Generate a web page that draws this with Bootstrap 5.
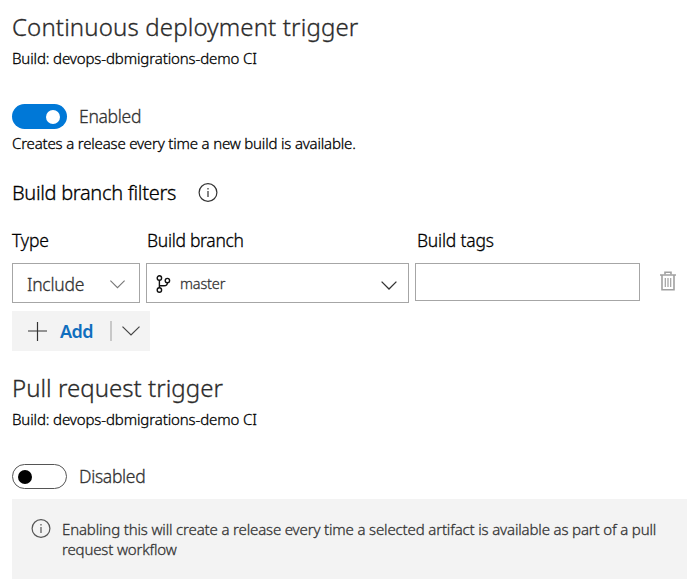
<!DOCTYPE html>
<html lang="en">
<head>
<meta charset="utf-8">
<meta name="viewport" content="width=device-width, initial-scale=1">
<title>Release triggers</title>
<link href="https://cdn.jsdelivr.net/npm/bootstrap@5.3.0/dist/css/bootstrap.min.css" rel="stylesheet">
<style>
body { font-family: "Noto Sans", "Open Sans", sans-serif; font-size: 15px; font-weight: 300; line-height: 20px; color: #000; background: #fff; -webkit-text-stroke: .3px currentColor; }
.panel { padding: 11px 7px 5px 12px; }
.title { font-size: 24px; line-height: 32px; letter-spacing: .14px; font-weight: 300; color: #2b2b2b; margin: 0 0 5px; }
.pr-title { letter-spacing: .03px; margin-top: 21px; }
.source { letter-spacing: -.12px; }
.toggle-row { margin-top: 36px; height: 25px; gap: 12px; font-size: 17.5px; letter-spacing: -.3px; color: #333; }
.toggle-row span { padding-bottom: 2px; }
.toggle-row.pr { margin-top: 35px; }
.switch { width: 55px; height: 25px; border: 0; border-radius: 13px; padding: 0 7px; background: #0078d7; }
.switch i { width: 14px; height: 14px; border-radius: 50%; background: #fff; display: block; }
.switch.off { background: #fff; border: 1px solid #555; padding: 0 5px; }
.switch.off i { background: #000; }
.hint { margin-top: 4px; letter-spacing: -.18px; }
.filters-title { font-size: 20px; line-height: 28px; letter-spacing: -.32px; font-weight: 300; margin: 0; }
.filters-head { margin-top: 26px; gap: 22px; }
.filter-grid { display: grid; grid-template-columns: 128px 263px 225px auto; column-gap: 6px; margin-top: 21px; }
.filter-grid label { font-size: 17.5px; line-height: 24px; letter-spacing: -.3px; margin-bottom: 11px; padding-left: 1px; }
.filter-grid label:first-child { padding-left: 0; letter-spacing: -.1px; }
.filter-grid label:nth-child(3) { padding-left: 2px; letter-spacing: -.2px; }
.box { border: 1px solid #a6a6a6; border-radius: 0; background: #fff; color: #333; height: 40px; padding: 0; text-align: left; font-weight: 300; }
.type-box { font-size: 17.5px; letter-spacing: -.26px; padding: 2px 14px 0 14px; }
.branch-box { font-size: 14.5px; letter-spacing: -.15px; padding: 1px 11px 0 9px; }
.branch-name { margin-left: 9px; padding-bottom: 2px; }
.tags-box { height: 38px; width: 100%; }
.trash { margin: 8px 0 0 14px; padding: 0; border: 0; width: 18px; height: 20px; background: none; }
.add-group { width: 138px; height: 40px; background: #f3f3f3; margin-top: 8px; }
.add-btn { color: #106ebe; font-weight: 600; font-size: 18px; letter-spacing: -.6px; padding: 0 0 0 16px; border: 0; background: none; gap: 13px; width: 98px; -webkit-text-stroke: 0; }
.add-menu { border: 0; background: none; padding: 0 0 0 10px; }
.divider { width: 2px; height: 20px; background: #c8c8c8; }
.info { background: #f3f3f3; color: #333; height: 80px; margin-top: 10px; padding: 20px 20px 0 19px; gap: 11px; letter-spacing: -.15px; }
svg { display: block; flex: none; }
</style>
<script src="https://cdn.jsdelivr.net/npm/bootstrap@5.3.0/dist/js/bootstrap.bundle.min.js"></script>
</head>
<body>
<main class="panel">
  <section>
    <h1 class="title">Continuous deployment trigger</h1>
    <div class="source">Build: devops-dbmigrations-demo CI</div>
    <div class="toggle-row d-flex align-items-center">
      <button class="switch d-flex align-items-center justify-content-end" role="switch" aria-checked="true" aria-label="Continuous deployment"><i></i></button>
      <span>Enabled</span>
    </div>
    <div class="hint">Creates a release every time a new build is available.</div>

    <div class="filters-head d-flex align-items-center">
      <h2 class="filters-title">Build branch filters</h2>
      <svg width="20" height="20" viewBox="0 0 20 20" fill="none" stroke="#333"><circle cx="10" cy="9.5" r="8.9" stroke-width="1.2"/><path d="M10 8v6M10 5v1.4" stroke-width="1.2"/></svg>
    </div>

    <div class="filter-grid">
      <label>Type</label><label>Build branch</label><label>Build tags</label><span></span>
      <button class="box type-box d-flex align-items-center justify-content-between">
        <span>Include</span>
        <svg width="15" height="9" viewBox="0 0 15 9" fill="none" stroke="#777" stroke-width="1.1"><path d="M.4.6 7.5 7.7 14.6.6"/></svg>
      </button>
      <button class="box branch-box d-flex align-items-center">
        <svg width="15" height="18" viewBox="0 0 15 18" fill="none" stroke="#111" stroke-width="1.4"><circle cx="3.4" cy="3" r="2.2"/><circle cx="3.4" cy="15" r="2.2"/><circle cx="11.4" cy="5.6" r="2.2"/><path d="M3.4 5.2v7.6M11.4 7.8C11.4 10 10 10.8 8 10.8H3.4"/></svg>
        <span class="branch-name">master</span>
        <svg class="ms-auto mt-1" width="16" height="9" viewBox="0 0 16 9" fill="none" stroke="#333" stroke-width="1.3"><path d="M.6.6 8 8 15.4.6"/></svg>
      </button>
      <input class="box tags-box" type="text" aria-label="Build tags">
      <button class="trash" aria-label="Delete filter">
        <svg width="16" height="20" viewBox="0 0 16 20" fill="none" stroke="#a0a0a0"><path d="M0 4h16" stroke-width="1.5"/><path d="M5 3.5V1.2h6v2.3M2 4v14.8h12V4" stroke-width="1.6"/><path d="M5.3 7v9M8 7v9M10.7 7v9" stroke-width="1.2"/></svg>
      </button>
    </div>

    <div class="add-group d-flex align-items-center">
      <button class="add-btn d-flex align-items-center">
        <svg width="19" height="19" viewBox="0 0 19 19" stroke="#333" stroke-width="1.2"><path d="M0 9h19M9.5 0v19"/></svg>
        <span>Add</span>
      </button>
      <span class="divider"></span>
      <button class="add-menu" aria-label="More add options">
        <svg width="18" height="10" viewBox="0 0 18 10" fill="none" stroke="#444" stroke-width="1.2"><path d="M.5.6 9 9 17.5.6"/></svg>
      </button>
    </div>
  </section>

  <section>
    <h1 class="title pr-title">Pull request trigger</h1>
    <div class="source">Build: devops-dbmigrations-demo CI</div>
    <div class="toggle-row pr d-flex align-items-center">
      <button class="switch off d-flex align-items-center" role="switch" aria-checked="false" aria-label="Pull request"><i></i></button>
      <span>Disabled</span>
    </div>
    <div class="info d-flex align-items-start">
      <svg width="20" height="20" viewBox="0 0 20 20" fill="none" stroke="#555"><circle cx="10" cy="9.5" r="8.9" stroke-width="1.2"/><path d="M10 8v6M10 5v1.4" stroke-width="1.2"/></svg>
      <div>Enabling this will create a release every time a selected artifact is available as part of a pull request workflow</div>
    </div>
  </section>
</main>
</body>
</html>
